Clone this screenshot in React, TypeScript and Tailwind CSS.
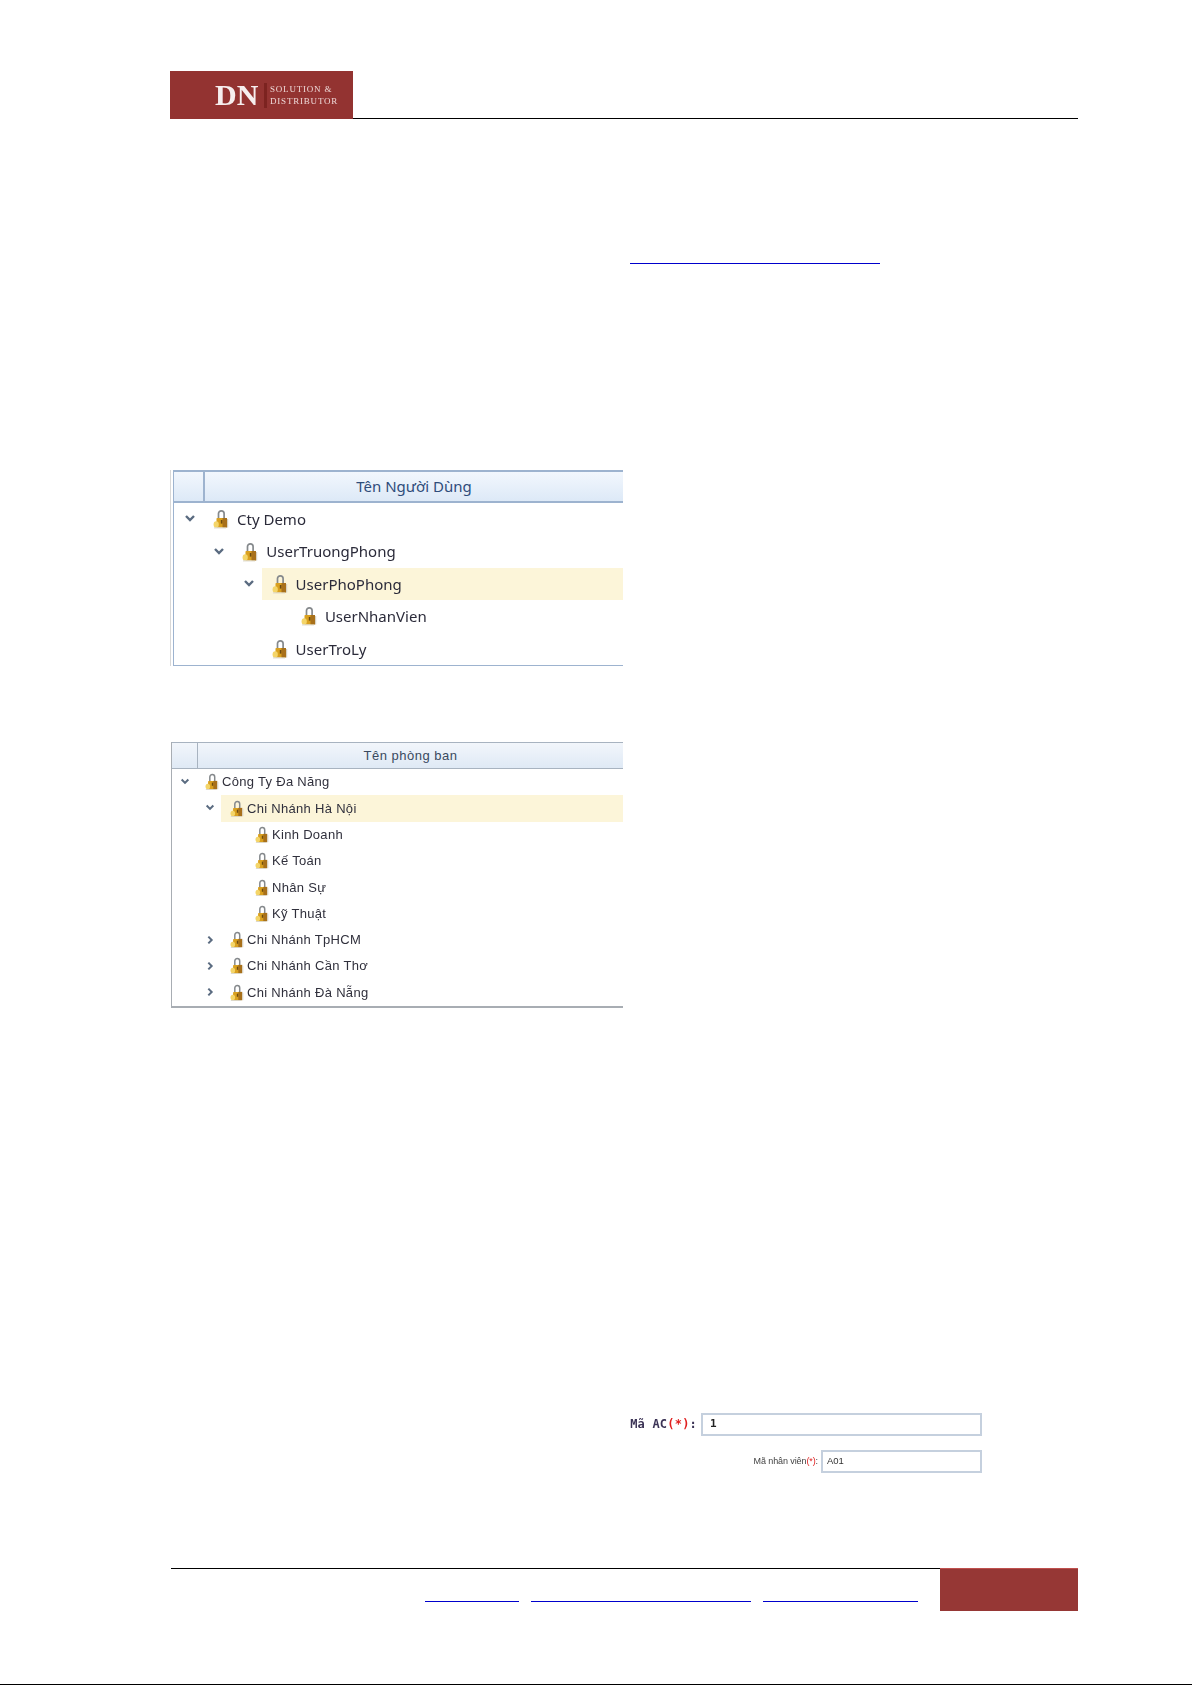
const Lock = ({ s = 16 }: { s?: number }) => (
  <svg width={s} height={s * 1.25} viewBox="0 0 16 20" className="shrink-0">
    <path d="M5.5 9V4.6a2.8 2.8 0 0 1 5.6 0V9" fill="none" stroke="#85898c" strokeWidth="1.7" />
    <rect x="3.5" y="9" width="10" height="9.5" rx="0.8" fill="#d9a01f" />
    <rect x="9.5" y="9" width="4.5" height="9.5" fill="#a8701a" />
    <rect x="14" y="10" width="1.2" height="8.5" fill="#d8d2c4" />
    <rect x="7.8" y="11" width="1.6" height="3.6" fill="#6d4a10" />
    <ellipse cx="3.2" cy="15.4" rx="2.6" ry="3.2" fill="#f4d569" />
    <rect x="1" y="18.4" width="12" height="1" fill="#d9d4c6" />
  </svg>
);

const Chev = ({ open = true, size = 12 }: { open?: boolean; size?: number }) => (
  <svg width={size} height={size} viewBox="0 0 12 12" className="shrink-0">
    <path d={open ? "M2 3 6 7 10 3" : "M4 2 8 6 4 10"} fill="none" stroke="#5a6b80" strokeWidth="2.4" />
  </svg>
);

type Row = { t: string; d: number; c?: "open" | "closed"; hl?: boolean };

const users: Row[] = [
  { t: "Cty Demo", d: 0, c: "open" },
  { t: "UserTruongPhong", d: 1, c: "open" },
  { t: "UserPhoPhong", d: 2, c: "open", hl: true },
  { t: "UserNhanVien", d: 3 },
  { t: "UserTroLy", d: 2 },
];

const depts: Row[] = [
  { t: "Công Ty Đa Năng", d: 0, c: "open" },
  { t: "Chi Nhánh Hà Nội", d: 1, c: "open", hl: true },
  { t: "Kinh Doanh", d: 2 },
  { t: "Kế Toán", d: 2 },
  { t: "Nhân Sự", d: 2 },
  { t: "Kỹ Thuật", d: 2 },
  { t: "Chi Nhánh TpHCM", d: 1, c: "closed" },
  { t: "Chi Nhánh Cần Thơ", d: 1, c: "closed" },
  { t: "Chi Nhánh Đà Nẵng", d: 1, c: "closed" },
];

export default function App() {
  return (
    <div className="w-[1192px] h-[1685px] bg-white overflow-hidden border-b border-black font-['Liberation_Sans',sans-serif]">
      {/* header */}
      <div className="ml-[170px] mr-[114px] pt-[71px]">
        <div className="border-b border-black h-[48px]">
          <div className="w-[183px] h-[48px] bg-[#933331] flex items-center pl-[45px] gap-[3px]">
            <span className="font-['Liberation_Serif',serif] font-bold text-[30px] leading-none text-[#f6eeee] w-[46px] blur-[0.5px]">DN</span>
            <div className="w-[3px] h-[25px] bg-[#7c2320]" />
            <div className="font-['Liberation_Serif',serif] text-[9px] leading-[12px] tracking-[0.8px] text-[#eed9d8] whitespace-nowrap blur-[0.5px]">
              <div>SOLUTION &amp;</div>
              <div>DISTRIBUTOR</div>
            </div>
          </div>
        </div>
      </div>

      {/* link underline */}
      <div className="ml-[630px] mt-[144px] w-[250px] h-[1px] bg-[#0000cc]" />

      {/* user table */}
      <div className="ml-[170px] mt-[206px] w-[453px] border-l border-[#d8d8d8] pl-[2px] blur-[0.3px]">
        <div className="border-l border-b border-[#9db3cf] font-['Noto_Sans','DejaVu_Sans',sans-serif]">
          <div className="flex h-[33px] border-y-2 border-[#9db3cf] bg-gradient-to-b from-[#f2f7fd] to-[#dde9f7] text-[#2f4c7a] text-[15px]">
            <div className="w-[31px] border-r-2 border-[#9db3cf]" />
            <div className="flex-1 flex items-center justify-center">Tên Người Dùng</div>
          </div>
          {users.map((r) => (
            <div key={r.t} className="flex items-center h-[32.4px] text-[15px] text-[#2b2b3a]" style={{ paddingLeft: 10 + r.d * 29.3 }}>
              <div className="w-[19px] flex">{r.c && <Chev open />}</div>
              <div className={`flex-1 flex items-center h-full pl-[10px] gap-[8px] ${r.hl ? "bg-[#fcf5d9]" : ""}`}>
                <Lock s={16} />
                <span>{r.t}</span>
              </div>
            </div>
          ))}
        </div>
      </div>

      {/* dept table */}
      <div className="ml-[171px] mt-[76px] w-[452px] blur-[0.7px]">
        <div className="border-l border-b-2 border-[#a8adb3]">
          <div className="flex h-[27px] border-y border-[#a8b3c0] bg-gradient-to-b from-[#f2f6fb] to-[#dfe9f5] text-[#3a4a60] text-[13px]">
            <div className="w-[26px] border-r border-[#a8b3c0]" />
            <div className="flex-1 flex items-center justify-center tracking-[0.5px]">Tên phòng ban</div>
          </div>
          {depts.map((r) => (
            <div key={r.t} className="flex items-center h-[26.3px] text-[13px] text-[#30303c] tracking-[0.3px]" style={{ paddingLeft: 8 + r.d * 25 }}>
              <div className="w-[16px] flex">{r.c && <Chev open={r.c === "open"} size={10} />}</div>
              <div className={`flex-1 flex items-center h-full pl-[9px] gap-[3px] ${r.hl ? "bg-[#fcf5d9]" : ""}`}>
                <Lock s={14} />
                <span>{r.t}</span>
              </div>
            </div>
          ))}
        </div>
      </div>

      {/* forms */}
      <div className="mt-[405.3px] ml-[600px] w-[382px] blur-[0.5px]">
        <div className="flex items-center justify-end gap-[4px] h-[23px]">
          <span className="font-['DejaVu_Sans_Mono',monospace] font-bold text-[12px] tracking-[0.2px] text-[#3b3355]">
            Mã AC<span className="text-[#e02020]">(*)</span>:
          </span>
          <div className="w-[281px] h-[23px] border-2 border-[#c5d0de] flex items-center pl-[7px] font-['DejaVu_Sans_Mono',monospace] font-bold text-[11px] text-[#222]">1</div>
        </div>
        <div className="flex items-center justify-end gap-[3px] h-[23px] mt-[14px]">
          <span className="text-[9px] text-[#444] tracking-[-0.1px]">
            Mã nhân viên<span className="text-[#e02020]">(*)</span>:
          </span>
          <div className="w-[161px] h-[23px] border-2 border-[#c5d0de] flex items-center pl-[4px] text-[9.5px] text-[#333]">A01</div>
        </div>
      </div>

      {/* footer */}
      <div className="ml-[171px] mt-[95px] w-[907px] h-[43px] flex">
        <div className="flex-1 border-t border-black flex items-end pb-[9px] pl-[254px] gap-[12px]">
          <div className="w-[94px] h-[1px] bg-[#0000cc]" />
          <div className="w-[220px] h-[1px] bg-[#0000cc]" />
          <div className="w-[155px] h-[1px] bg-[#0000cc]" />
        </div>
        <div className="w-[138px] h-[43px] bg-[#963735] border-t border-[#c0504d]" />
      </div>
    </div>
  );
}
